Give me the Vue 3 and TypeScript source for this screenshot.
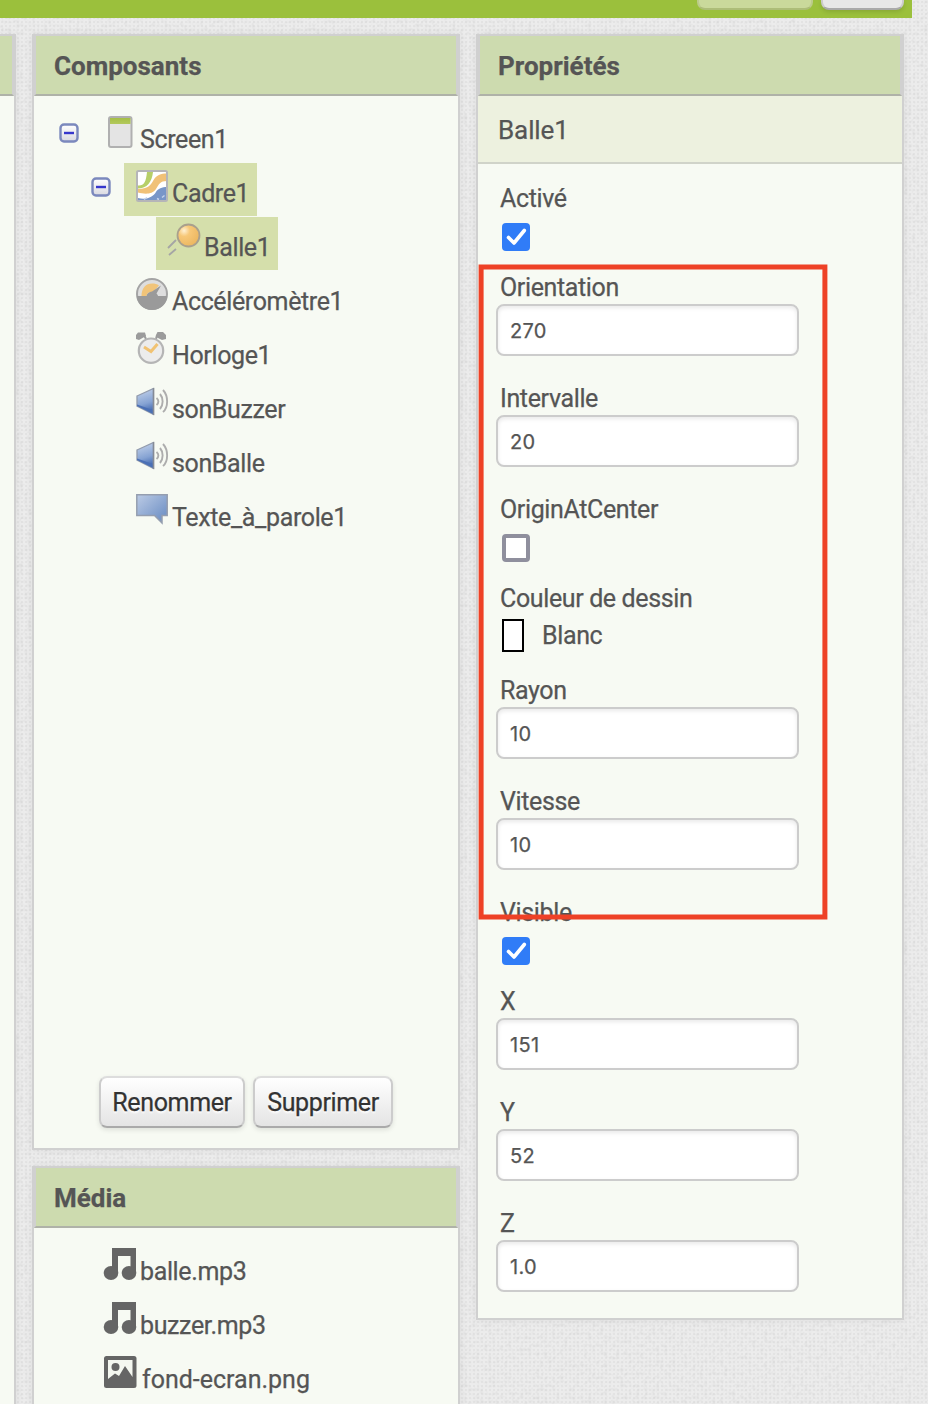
<script setup lang="ts">
type IconName = 'screen' | 'canvas' | 'ball' | 'accel' | 'clock' | 'sound' | 'speech' | 'music' | 'image'

interface TreeNode {
  label: string
  icon: IconName
  level: number
  toggle?: boolean
  selected?: boolean
}

interface Property {
  label: string
  kind: 'text' | 'check' | 'color'
  value: string | boolean
}

const nodes: TreeNode[] = [
  { label: 'Screen1', icon: 'screen', level: 0, toggle: true },
  { label: 'Cadre1', icon: 'canvas', level: 1, toggle: true, selected: true },
  { label: 'Balle1', icon: 'ball', level: 2, selected: true },
  { label: 'Accéléromètre1', icon: 'accel', level: 1 },
  { label: 'Horloge1', icon: 'clock', level: 1 },
  { label: 'sonBuzzer', icon: 'sound', level: 1 },
  { label: 'sonBalle', icon: 'sound', level: 1 },
  { label: 'Texte_à_parole1', icon: 'speech', level: 1 },
]

const media: { label: string; icon: IconName }[] = [
  { label: 'balle.mp3', icon: 'music' },
  { label: 'buzzer.mp3', icon: 'music' },
  { label: 'fond-ecran.png', icon: 'image' },
]

const properties: Property[] = [
  { label: 'Activé', kind: 'check', value: true },
  { label: 'Orientation', kind: 'text', value: '270' },
  { label: 'Intervalle', kind: 'text', value: '20' },
  { label: 'OriginAtCenter', kind: 'check', value: false },
  { label: 'Couleur de dessin', kind: 'color', value: 'Blanc' },
  { label: 'Rayon', kind: 'text', value: '10' },
  { label: 'Vitesse', kind: 'text', value: '10' },
  { label: 'Visible', kind: 'check', value: true },
  { label: 'X', kind: 'text', value: '151' },
  { label: 'Y', kind: 'text', value: '52' },
  { label: 'Z', kind: 'text', value: '1.0' },
]
</script>

<template>
  <div class="page">
    <svg class="texture" width="928" height="1404" aria-hidden="true">
      <defs>
        <filter id="grain" x="0" y="0" width="100%" height="100%">
          <feTurbulence type="fractalNoise" baseFrequency="0.25" numOctaves="2" seed="4" />
          <feColorMatrix values="0 0 0 0 0.5  0 0 0 0 0.5  0 0 0 0 0.5  0.5 0 0 0 -0.22" />
        </filter>
        <pattern id="weave" width="4" height="4" patternUnits="userSpaceOnUse">
          <rect width="4" height="4" fill="#ececec" />
          <rect x="1" y="1" width="2" height="2" fill="#e3e3e3" />
        </pattern>
      </defs>
      <rect width="928" height="1404" fill="url(#weave)" />
      <rect width="928" height="1404" filter="url(#grain)" />
    </svg>

    <svg class="defs" width="0" height="0" aria-hidden="true">
      <defs>
        <linearGradient id="gBlue" x1="0" y1="0" x2="1" y2="1">
          <stop offset="0" stop-color="#bccbe5" /><stop offset="0.8" stop-color="#7696c8" />
        </linearGradient>
        <linearGradient id="gHorn" x1="0" y1="0" x2="0.2" y2="1">
          <stop offset="0" stop-color="#cbd8ed" /><stop offset="0.65" stop-color="#86a3d3" /><stop offset="1" stop-color="#4369b0" />
        </linearGradient>
        <radialGradient id="gBall" cx="0.3" cy="0.28" r="0.75">
          <stop offset="0" stop-color="#fff1d4" /><stop offset="0.35" stop-color="#f7c878" /><stop offset="1" stop-color="#ecb760" />
        </radialGradient>
        <linearGradient id="gToggle" x1="0" y1="0" x2="0" y2="1">
          <stop offset="0" stop-color="#fff" /><stop offset="1" stop-color="#d8d8e0" />
        </linearGradient>
        <linearGradient id="gGreen" x1="0" y1="0" x2="0" y2="1">
          <stop offset="0" stop-color="#a5bf45" /><stop offset="1" stop-color="#b3c95e" />
        </linearGradient>
      </defs>
    </svg>

    <header class="topbar">
      <span class="top-btn top-btn-faded"></span>
      <span class="top-btn"></span>
    </header>

    <main class="columns">
      <section class="panel stub"><div class="panel-head"></div></section>

      <div class="column">
        <section class="panel components">
          <h2 class="panel-head">Composants</h2>
          <div class="tree">
            <div v-for="n in nodes" :key="n.label" class="row" :class="'level-' + n.level">
              <span class="toggle-slot">
                <svg v-if="n.toggle" width="20" height="20" viewBox="0 0 20 20">
                  <rect x="1.5" y="1.5" width="17" height="17" rx="3.5" fill="url(#gToggle)" stroke="#7b88bd" stroke-width="2.4" />
                  <rect x="5" y="8.8" width="10" height="2.4" fill="#3636cc" />
                </svg>
              </span>
              <span class="item" :class="{ selected: n.selected }">
                <svg class="icon" width="32" height="32" viewBox="0 0 32 32">
                  <g v-if="n.icon === 'screen'">
                    <rect x="5" y="1" width="22.5" height="30" rx="2" fill="#e4e4e4" stroke="#b0b0b0" stroke-width="2" />
                    <rect x="6" y="2" width="20.5" height="6" fill="url(#gGreen)" />
                  </g>
                  <g v-else-if="n.icon === 'canvas'">
                    <rect x="1" y="1" width="30" height="30" rx="1" fill="#fff" />
                    <path d="M2 15.500C8 16 10 12 11 2H17C16 12 11 18.500 2 18.500Z" fill="#b7cf68" />
                    <path d="M2 19C9 19 14 17 17 11C20 5 25 3.500 31 3.500V11C24 11 23 14 20 19C16 25 8 24 2 22.500Z" fill="#f0c177" />
                    <path d="M2 31V28C11 30 17 27 20 22C22 18.500 26 17 31 17V31Z" fill="#7896c8" />
                    <path d="M8 29.500L11 27.500M21 28.500L23 29.500M26 27.500L28.500 25.500" stroke="#c5d3ea" stroke-width="1.500" />
                    <rect x="1" y="1" width="30" height="30" rx="1.500" fill="none" stroke="#b5b5b8" stroke-width="2" />
                  </g>
                  <g v-else-if="n.icon === 'ball'">
                    <circle cx="20.500" cy="11.500" r="11" fill="url(#gBall)" stroke="#a9a08d" stroke-width="1.800" />
                    <path d="M0 24L8 16M1 31L8 25" stroke="#a5a5a5" stroke-width="1.800" fill="none" />
                  </g>
                  <g v-else-if="n.icon === 'accel'">
                    <circle cx="16" cy="16" r="15" fill="#dedede" stroke="#a4a4a4" stroke-width="2" />
                    <path d="M5.500 18C5.500 10 10 5.500 16 5.500C19 5.500 21 6 23 7.500L17 14C13 13.500 11 15 10.500 18Z" fill="#f1c479" />
                    <path d="M1 18H10.500C11 15.500 13 14 16 13.500L25 7.500L20.500 15.500C21.500 16.500 21.700 17 22 18H31A15 14 0 0 1 1 18Z" fill="#9a9a9a" />
                  </g>
                  <g v-else-if="n.icon === 'clock'">
                    <path d="M0 7V3L2 0.500H9L10 4L3 8ZM20 3L21.500 0H27L30 3V7L26 8L20 5Z" fill="#9b9b9b" />
                    <path d="M8 3L10 7M21 3L20 7" stroke="#9b9b9b" stroke-width="2" />
                    <circle cx="15" cy="18.700" r="12.200" fill="#ececec" stroke="#b5b5b5" stroke-width="2.200" />
                    <path d="M8 15L15 19.500L21.500 12" fill="none" stroke="#f1c272" stroke-width="3" />
                  </g>
                  <g v-else-if="n.icon === 'sound'">
                    <path d="M1 10L17.500 2.500V28.500L1 20Z" fill="url(#gHorn)" stroke="#929bad" stroke-width="1.300" />
                    <path d="M1 18.500L17 24V28L1 20Z" fill="#4b70b5" />
                    <path d="M17.500 2V29" stroke="#858b96" stroke-width="1.500" />
                    <path d="M20.500 12C23 14 23 17 20.500 19M24 8C27.500 12 27.500 19 24 23M27 4C32.500 10 32.500 21 27 26" fill="none" stroke="#adadad" stroke-width="1.900" />
                  </g>
                  <g v-else-if="n.icon === 'speech'">
                    <path d="M0.800 0.800H31.200V21.500H26V29L18.500 21.500H0.800Z" fill="url(#gBlue)" stroke="#959eaf" stroke-width="1.500" />
                  </g>
                </svg>
                <span class="name">{{ n.label }}</span>
              </span>
            </div>
          </div>
          <div class="actions">
            <button class="btn rename" type="button">Renommer</button>
            <button class="btn delete" type="button">Supprimer</button>
          </div>
        </section>

        <section class="panel media">
          <h2 class="panel-head">Média</h2>
          <div class="files">
            <div v-for="m in media" :key="m.label" class="file" :class="m.icon">
              <svg class="icon" width="32" height="32" viewBox="0 0 32 32">
                <g v-if="m.icon === 'music'" fill="#656565">
                  <path d="M8 0H32V25.500H26.500V8H14V25.500H8Z" />
                  <ellipse cx="7" cy="25" rx="7.300" ry="7" />
                  <ellipse cx="25" cy="25" rx="7.300" ry="7" />
                </g>
                <g v-else>
                  <rect width="32.500" height="32" rx="2.500" fill="#656565" />
                  <path d="M4 4H28.500V21L21 10L15 20L11 17.500L4 23Z" fill="#f4f7f0" />
                  <circle cx="11.500" cy="11" r="4" fill="#656565" />
                </g>
              </svg>
              <span class="name">{{ m.label }}</span>
            </div>
          </div>
        </section>
      </div>

      <section class="panel props">
        <h2 class="panel-head">Propriétés</h2>
        <div class="subject">Balle1</div>
        <div class="prop-list">
          <div v-for="p in properties" :key="p.label" class="prop" :class="p.kind">
            <div class="label">{{ p.label }}</div>
            <div v-if="p.kind === 'text'" class="field">{{ p.value }}</div>
            <div v-else-if="p.kind === 'check'" class="check" :class="{ on: p.value }">
              <svg v-if="p.value" width="28" height="28" viewBox="0 0 28 28">
                <path d="M6.500 14.500L12 20L22.300 7.500" fill="none" stroke="#fff" stroke-width="3.600" stroke-linecap="round" stroke-linejoin="round" />
              </svg>
            </div>
            <div v-else class="color"><span class="swatch"></span><span>{{ p.value }}</span></div>
          </div>
        </div>
      </section>
    </main>

    <svg class="highlight" width="352" height="660" viewBox="0 0 352 660" aria-hidden="true">
      <rect x="4.100" y="4" width="343.800" height="650" fill="none" stroke="#ee4126" stroke-width="5" />
    </svg>
  </div>
</template>

<style>
body {
  overflow: hidden;
}
</style>

<style scoped>
.page {
  position: relative;
  width: 928px;
  height: 1404px;
  overflow: hidden;
  background: #e8e8e8;
  font-family: Roboto, "Liberation Sans", sans-serif;
  font-size: 25px;
  letter-spacing: -0.37px;
  -webkit-text-stroke: 0.25px currentColor;
  color: #555;
}
.texture {
  position: absolute;
  inset: 0;
}
.defs {
  position: absolute;
}
.topbar {
  position: relative;
  box-sizing: border-box;
  width: 912px;
  height: 18px;
  padding-right: 8px;
  background: #9bc03c;
  display: flex;
  justify-content: flex-end;
  gap: 8px;
}
.top-btn {
  box-sizing: border-box;
  width: 83px;
  height: 10px;
  border: 2px solid #ccc;
  border-top: 0;
  border-bottom-color: #aaa;
  border-radius: 0 0 8px 8px;
  background: #e8e8e8;
  box-shadow: 0 2px 4px rgba(0, 0, 0, 0.12);
}
.top-btn-faded {
  width: 116px;
  border-color: #bccb8b;
  border-bottom-color: #adbd78;
  background: #cad99b;
  box-shadow: none;
}
.columns {
  position: relative;
  display: flex;
  align-items: flex-start;
  gap: 16px;
  margin-top: 16px;
}
.column {
  display: flex;
  flex-direction: column;
  gap: 16px;
}
.panel {
  box-sizing: border-box;
  width: 428px;
  border: 2px solid #d0d0d0;
  background: #f7faf3;
  box-shadow: 0 0 8px rgba(0, 0, 0, 0.06);
}
.stub {
  width: 16px;
  height: 1400px;
  border-left: 0;
}
.panel-head {
  box-sizing: border-box;
  height: 60px;
  margin: 0;
  padding-left: 18px;
  border: 2px solid #d0d0d0;
  border-top: 0;
  border-bottom-color: #afb2a8;
  background: #cddbaf;
  font-size: 26px;
  font-weight: 700;
  letter-spacing: 0;
  line-height: 61px;
}
.stub .panel-head {
  padding: 0;
  border-left: 0;
}
.components {
  height: 1116px;
  display: flex;
  flex-direction: column;
}
.tree {
  padding-top: 13px;
  flex: 1;
}
.row {
  display: flex;
  height: 54px;
}
.level-0 {
  padding-left: 22px;
}
.level-1 {
  padding-left: 54px;
}
.level-2 {
  padding-left: 86px;
}
.toggle-slot {
  box-sizing: border-box;
  width: 36px;
  padding: 14px 0 0 3px;
}
.toggle-slot svg {
  display: block;
}
.item {
  box-sizing: border-box;
  height: 53px;
  padding: 7px 8px 0 12px;
  display: flex;
  gap: 4px;
}
.selected {
  background: #d5dfab;
}
.icon {
  display: block;
  flex: none;
  overflow: visible;
}
.name {
  line-height: 28px;
  padding-top: 10px;
  white-space: nowrap;
}
.actions {
  display: flex;
  gap: 8px;
  padding: 0 0 20px 65px;
}
.btn {
  box-sizing: border-box;
  height: 52px;
  padding: 0;
  border: 2px solid #ddd;
  border-right-color: #ccc;
  border-left-color: #ccc;
  border-bottom-color: #aaa;
  border-radius: 8px;
  background: linear-gradient(#fff, #e4e4e4);
  box-shadow: 0 2px 5px rgba(0, 0, 0, 0.1);
  color: #333;
  font: inherit;
  letter-spacing: inherit;
  line-height: 49px;
  text-shadow: 0 2px 2px #fff;
}
.rename {
  width: 146px;
}
.delete {
  width: 140px;
}
.media {
  height: 300px;
}
.files {
  padding: 13px 0 0 70px;
}
.file {
  display: flex;
  gap: 4px;
  height: 47px;
  padding-top: 7px;
}
.file.image {
  gap: 6px;
  letter-spacing: 0;
}
.props {
  height: 1286px;
}
.subject {
  box-sizing: border-box;
  height: 68px;
  padding-left: 20px;
  border-bottom: 2px solid #d0d3c9;
  background: #edf1df;
  font-size: 26px;
  letter-spacing: -0.1px;
  line-height: 68px;
}
.prop-list {
  padding: 17px 0 0 18px;
}
.prop {
  height: 111px;
}
.check.prop {
  height: 89px;
}
.color.prop {
  height: 92px;
}
.label {
  height: 34px;
  padding-left: 4px;
  line-height: 36px;
}
.field {
  box-sizing: border-box;
  width: 303px;
  height: 52px;
  padding-left: 12px;
  border: 2px solid #ccc;
  border-radius: 8px;
  background: #fff;
  box-shadow: inset 0 2px 4px rgba(0, 0, 0, 0.09);
  font-family: Inter, Roboto, sans-serif;
  font-size: 20px;
  letter-spacing: 0.3px;
  line-height: 50px;
}
div.check:not(.prop) {
  box-sizing: border-box;
  width: 28px;
  height: 28px;
  margin: 8px 0 0 6px;
  border: 4px solid #8f8f9d;
  border-radius: 4px;
  background: #fff;
}
div.check.on:not(.prop) {
  border: 0;
  background: #307cf7;
}
.check svg {
  display: block;
}
div.color:not(.prop) {
  display: flex;
  gap: 18px;
  padding: 4px 0 0 6px;
  line-height: 34px;
}
.swatch {
  box-sizing: border-box;
  width: 22px;
  height: 33px;
  border: 2px solid #000;
  background: #fff;
}
.highlight {
  position: absolute;
  left: 477px;
  top: 263px;
}
</style>
